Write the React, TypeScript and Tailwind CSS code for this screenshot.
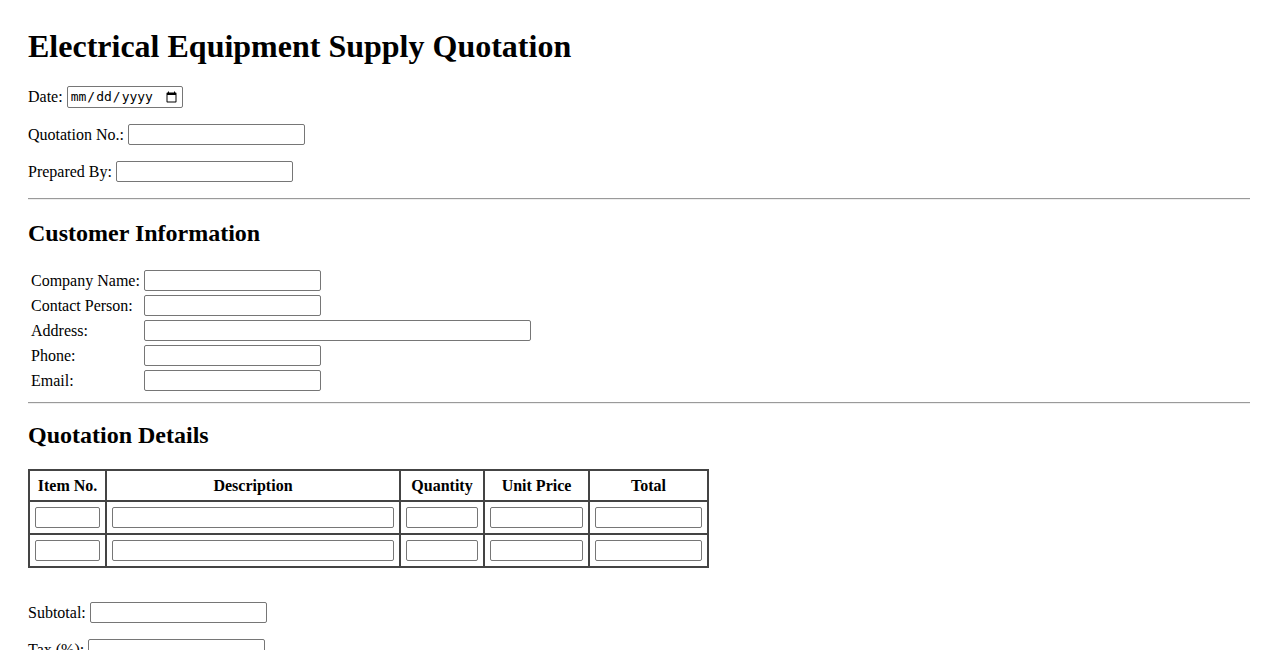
import React from 'react';

const inputCls =
  "h-[21px] border border-[#767676] rounded-[2px] bg-white px-[2px] py-[1px] text-[13.33px] font-[family-name:'Liberation_Sans',Arial,sans-serif]";

const Field = ({ label }: { label: string }) => (
  <p className="my-4 flex items-center h-[21px] gap-[4px]">
    <label>{label}</label>
    <input type="text" className={`${inputCls} w-[177px]`} />
  </p>
);

const Rule = ({ className = '' }: { className?: string }) => (
  <div className={`h-0 border-t border-b border-t-[#9a9a9a] border-b-[#eeeeee] ${className}`} />
);

export default function App() {
  const customer = [
    { label: 'Company Name:', wide: false },
    { label: 'Contact Person:', wide: false },
    { label: 'Address:', wide: true },
    { label: 'Phone:', wide: false },
    { label: 'Email:', wide: false },
  ];

  const cols = [
    { name: 'Item No.', w: 'w-[77px]' },
    { name: 'Description', w: 'w-[294px]' },
    { name: 'Quantity', w: 'w-[84px]' },
    { name: 'Unit Price', w: 'w-[105px]' },
    { name: 'Total', w: 'w-[119px]' },
  ];

  return (
    <div className="min-h-screen bg-white text-black px-[28px] pt-[28px] text-[16px] font-[family-name:'Liberation_Serif','Times_New_Roman',serif]">
      <h1 className="text-[32px] font-bold leading-[37px] mb-[21px]">Electrical Equipment Supply Quotation</h1>

      {/* Header fields */}
      <p className="mb-4 flex items-center h-[22px] gap-[4px]">
        <label>Date:</label>
        <input
          type="date"
          className="w-[116px] h-[22px] border border-[#767676] rounded-[2px] bg-white px-[2px] text-[13px] font-[family-name:'DejaVu_Sans_Mono',monospace]"
        />
      </p>
      <Field label="Quotation No.:" />
      <Field label="Prepared By:" />

      <Rule />

      {/* Customer */}
      <h2 className="text-[24px] font-bold leading-[28px] mt-[19px] mb-[20px]">Customer Information</h2>

      <table className="border-separate border-spacing-[2px]">
        <tbody>
          {customer.map((c) => (
            <tr key={c.label}>
              <td className="p-[1px] align-middle leading-[18px]">{c.label}</td>
              <td className="p-[1px] align-middle">
                <input type="text" className={`${inputCls} block ${c.wide ? 'w-[387px]' : 'w-[177px]'}`} />
              </td>
            </tr>
          ))}
        </tbody>
      </table>

      <Rule className="mt-2" />

      {/* Items */}
      <h2 className="text-[24px] font-bold leading-[28px] mt-[17px] mb-[20px]">Quotation Details</h2>

      <table className="border-collapse table-fixed border-2 border-[#444]">
        <thead>
          <tr>
            {cols.map((c) => (
              <th key={c.name} className={`${c.w} border-2 border-[#444] p-[5px] font-bold text-center leading-[19px]`}>
                {c.name}
              </th>
            ))}
          </tr>
        </thead>
        <tbody>
          {[1, 2].map((r) => (
            <tr key={r}>
              {cols.map((c) => (
                <td key={c.name} className="border-2 border-[#444] p-[5px]">
                  <input type="text" className={`${inputCls} block w-full`} />
                </td>
              ))}
            </tr>
          ))}
        </tbody>
      </table>

      <div className="h-[18px]" />
      <Field label="Subtotal:" />
      <Field label="Tax (%):" />
    </div>
  );
}
